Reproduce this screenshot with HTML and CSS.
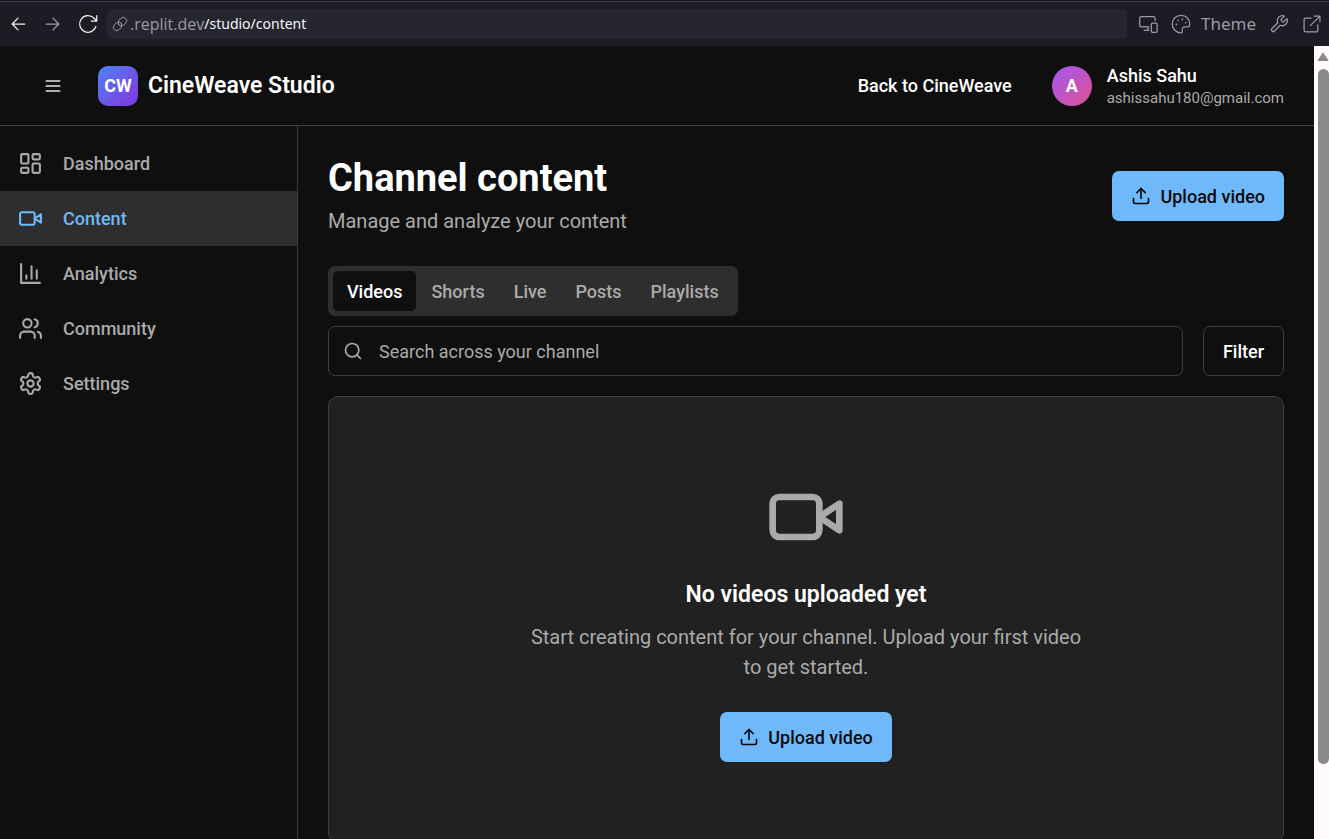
FILE: index.html
```html
<!DOCTYPE html>
<html lang="en">
<head>
<meta charset="utf-8">
<meta name="viewport" content="width=device-width, initial-scale=1">
<title>CineWeave Studio</title>
<link rel="stylesheet" href="styles.css">
</head>
<body>
<svg class="sprite" aria-hidden="true">
  <symbol id="video" viewBox="0 0 24 24"><path d="m22 8-6 4 6 4V8Z"/><rect x="2" y="6" width="14" height="12" rx="2"/></symbol>
  <symbol id="upload" viewBox="0 0 24 24"><path d="M21 15v4a2 2 0 0 1-2 2H5a2 2 0 0 1-2-2v-4"/><path d="m17 8-5-5-5 5"/><path d="M12 3v12"/></symbol>
</svg>

<div class="browser">
  <button class="tool bright" aria-label="Back"><svg class="icon i20" viewBox="0 0 24 24"><path d="M20 12H5M12 5l-7 7 7 7"/></svg></button>
  <button class="tool" aria-label="Forward"><svg class="icon i20" viewBox="0 0 24 24"><path d="M4 12h15M12 5l7 7-7 7"/></svg></button>
  <button class="tool bright" aria-label="Reload"><svg class="icon i20" viewBox="0 0 24 24"><path d="M21.500 15a10 10 0 1 1-2.500-10.200L22.500 8.500M22.500 2v6.500H16"/></svg></button>
  <div class="address">
    <svg class="icon i16" viewBox="0 0 24 24"><path d="M10 13a5 5 0 0 0 7.540.540l3-3a5 5 0 0 0-7.070-7.070l-3 3a5 5 0 0 0 0 7"/><path d="M14 11a5 5 0 0 0-7.540-.540l-3 3a5 5 0 0 0 7.070 7.070l3-3a5 5 0 0 0 0-7"/></svg>
    <label class="host" for="path">.replit.dev</label>
    <input class="path" id="path" type="text" value="/studio/content">
  </div>
  <div class="tools">
    <button class="tool" aria-label="Devices"><svg class="icon i20" viewBox="0 0 24 24"><path d="M20.500 8V5a2 2 0 0 0-2-2H4a2 2 0 0 0-2 2v8.500a2 2 0 0 0 2 2h9M12 15.500v4M7.500 19.500H13"/><rect x="16" y="11" width="7" height="11" rx="1.500"/></svg></button>
    <button class="tool theme"><svg class="icon i20" viewBox="0 0 24 24"><path d="M12 1.500a10.500 10.500 0 0 0 0 21c1.500 0 1.700-1 1.500-2.500-.500-3 .5-4.500 3.500-4.500h2.500c1.800 0 3-1.500 3-3.500C22.500 6 18 1.500 12 1.500Z"/><path d="M6.500 12.500h.1M8.500 7.500h.1M13.500 6.500h.1M17.500 10.500h.1" class="dots"/></svg>Theme</button>
    <button class="tool" aria-label="Tools"><svg class="icon i20" viewBox="0 0 24 24"><path d="M14.700 6.300a1 1 0 0 0 0 1.400l1.600 1.600a1 1 0 0 0 1.400 0l3.770-3.770a6 6 0 0 1-7.940 7.940l-6.910 6.910a2.120 2.120 0 0 1-3-3l6.910-6.910a6 6 0 0 1 7.940-7.940z"/></svg></button>
    <button class="tool" aria-label="Open in new tab"><svg class="icon i20" viewBox="0 0 24 24"><path d="M14.500 2.500h7v7M21.500 2.500 10 14M11 5H4.500a2 2 0 0 0-2 2v12.500a2 2 0 0 0 2 2H17a2 2 0 0 0 2-2V13"/></svg></button>
  </div>
</div>

<div class="viewport">
  <div class="app">
    <header class="header">
      <button class="menu" aria-label="Menu"><svg class="icon i20" viewBox="0 0 24 24"><path d="M4 6h16M4 12h16M4 18h16"/></svg></button>
      <a class="brand" href="#"><span class="logo">CW</span>CineWeave Studio</a>
      <a class="back" href="#">Back to CineWeave</a>
      <div class="user">
        <span class="avatar">A</span>
        <div>
          <div class="name">Ashis Sahu</div>
          <div class="email">ashissahu180@gmail.com</div>
        </div>
      </div>
    </header>

    <div class="body">
      <nav class="sidebar">
        <a class="item" href="#"><svg class="icon i25" viewBox="0 0 24 24"><rect x="3" y="3" width="7" height="9" rx="1"/><rect x="14" y="3" width="7" height="5" rx="1"/><rect x="14" y="12" width="7" height="9" rx="1"/><rect x="3" y="16" width="7" height="5" rx="1"/></svg>Dashboard</a>
        <a class="item active" href="#" aria-current="page"><svg class="icon i25"><use href="#video"/></svg>Content</a>
        <a class="item" href="#"><svg class="icon i25" viewBox="0 0 24 24"><path d="M3 3v18h18M18 17V9M13 17V5M8 17v-3"/></svg>Analytics</a>
        <a class="item" href="#"><svg class="icon i25" viewBox="0 0 24 24"><path d="M16 21v-2a4 4 0 0 0-4-4H6a4 4 0 0 0-4 4v2"/><circle cx="9" cy="7" r="4"/><path d="M22 21v-2a4 4 0 0 0-3-3.870M16 3.130a4 4 0 0 1 0 7.750"/></svg>Community</a>
        <a class="item" href="#"><svg class="icon i25" viewBox="0 0 24 24"><path d="M12.220 2h-.440a2 2 0 0 0-2 2v.180a2 2 0 0 1-1 1.730l-.430.250a2 2 0 0 1-2 0l-.150-.080a2 2 0 0 0-2.730.730l-.220.380a2 2 0 0 0 .730 2.730l.150.100a2 2 0 0 1 1 1.720v.510a2 2 0 0 1-1 1.740l-.150.090a2 2 0 0 0-.730 2.730l.220.380a2 2 0 0 0 2.730.730l.150-.080a2 2 0 0 1 2 0l.430.250a2 2 0 0 1 1 1.730V20a2 2 0 0 0 2 2h.440a2 2 0 0 0 2-2v-.180a2 2 0 0 1 1-1.730l.430-.250a2 2 0 0 1 2 0l.150.080a2 2 0 0 0 2.730-.730l.220-.390a2 2 0 0 0-.730-2.730l-.150-.080a2 2 0 0 1-1-1.740v-.500a2 2 0 0 1 1-1.740l.150-.090a2 2 0 0 0 .730-2.730l-.220-.380a2 2 0 0 0-2.730-.730l-.150.080a2 2 0 0 1-2 0l-.430-.250a2 2 0 0 1-1-1.730V4a2 2 0 0 0-2-2z"/><circle cx="12" cy="12" r="3"/></svg>Settings</a>
      </nav>

      <main class="main">
        <div class="heading">
          <div>
            <h1 class="title">Channel content</h1>
            <p class="subtitle">Manage and analyze your content</p>
          </div>
          <button class="primary"><svg class="icon i20"><use href="#upload"/></svg>Upload video</button>
        </div>

        <div class="tabs" role="tablist">
          <button class="tab selected" role="tab" aria-selected="true">Videos</button>
          <button class="tab" role="tab">Shorts</button>
          <button class="tab" role="tab">Live</button>
          <button class="tab" role="tab">Posts</button>
          <button class="tab" role="tab">Playlists</button>
        </div>

        <div class="filters">
          <label class="search">
            <svg class="icon i20" viewBox="0 0 24 24"><circle cx="11" cy="11" r="8"/><path d="m21 21-4.300-4.300"/></svg>
            <input class="query" type="text" placeholder="Search across your channel" aria-label="Search across your channel">
          </label>
          <button class="filter">Filter</button>
        </div>

        <section class="empty">
          <svg class="icon i80"><use href="#video"/></svg>
          <h2 class="empty-title">No videos uploaded yet</h2>
          <p class="empty-text">Start creating content for your channel. Upload your first video to get started.</p>
          <button class="primary"><svg class="icon i20"><use href="#upload"/></svg>Upload video</button>
        </section>
      </main>
    </div>
  </div>
  <div class="scrollbar" aria-hidden="true">
    <svg class="arrow" viewBox="0 0 12 10"><path d="M6 1 11 8.500H1Z"/></svg>
    <div class="thumb"></div>
    <div class="rest"></div>
  </div>
</div>
</body>
</html>
```

FILE: styles.css
```css
* {
  box-sizing: border-box;
}

body {
  margin: 0;
  height: 100vh;
  overflow: hidden;
  display: flex;
  flex-direction: column;
  background: #0f0f0f;
  color: #fff;
  font: 18px/25px Roboto, sans-serif;
}

button,
input {
  font: inherit;
  color: inherit;
  background: none;
  border: 0;
  padding: 0;
  margin: 0;
}

a {
  color: inherit;
  text-decoration: none;
}

h1,
h2,
p {
  margin: 0;
}

.sprite {
  display: none;
}

.icon {
  flex: none;
  display: block;
  fill: none;
  stroke: currentColor;
  stroke-width: 2;
  stroke-linecap: round;
  stroke-linejoin: round;
}

.i16 { width: 16px; height: 16px; }
.i20 { width: 20px; height: 20px; }
.i25 { width: 25px; height: 25px; }
.i80 { width: 80px; height: 80px; }

/* Browser bar */
.browser {
  flex: none;
  display: flex;
  align-items: center;
  gap: 15px;
  height: 46px;
  padding: 0 7px 0 8px;
  border-top: 1px solid #15151c;
  box-shadow: inset 0 1px #3c3c48;
  background: #1c1c25;
  color: #9a9aa3;
}

.browser .icon {
  stroke-width: 1.5;
}

.tool {
  display: flex;
  align-items: center;
  gap: 10px;
}

.bright {
  color: #f0f0f3;
}

.address {
  flex: 1;
  display: flex;
  align-items: center;
  height: 30px;
  margin-left: -6px;
  padding: 0 5px;
  border-radius: 6px;
  background: #262630;
  font: 14px/20px "Noto Sans", sans-serif;
}

.host {
  margin-left: 2px;
  font-size: 16px;
  font-family: "Open Sans", sans-serif;
}

.path {
  flex: 1;
  min-width: 0;
  color: #f5f5f7;
  outline: 0;
}

.tools {
  display: flex;
  gap: 13px;
  margin-left: -4px;
}

.theme {
  font: 17px/20px "Noto Sans", sans-serif;
}

.dots {
  stroke-width: 2;
}

/* Page and scrollbar */
.viewport {
  flex: 1;
  min-height: 0;
  display: flex;
}

.app {
  flex: 1;
  min-width: 0;
  display: flex;
  flex-direction: column;
}

.scrollbar {
  width: 15px;
  padding: 6px 0 0 3px;
  display: flex;
  flex-direction: column;
  background: #fffbfc;
}

.arrow {
  width: 12px;
  height: 10px;
  margin-bottom: 7px;
  fill: #8b8989;
  stroke: #8b8989;
  stroke-linejoin: round;
}

.thumb {
  flex: 695;
  margin-left: 1px;
  border-radius: 6px;
  background: #8b8989;
}

.rest {
  flex: 75;
}

/* Header */
.header {
  flex: none;
  display: flex;
  align-items: center;
  height: 80px;
  padding: 0 30px 0 43px;
  border-bottom: 1px solid #3f3f3f;
}

.menu {
  color: #e6e3e4;
}

.brand {
  display: flex;
  align-items: center;
  gap: 10px;
  margin-left: 35px;
  font-size: 23px;
  font-weight: 600;
}

.logo,
.avatar {
  display: flex;
  align-items: center;
  justify-content: center;
  width: 40px;
  height: 40px;
  font-size: 18px;
  font-weight: 700;
}

.logo {
  border-radius: 10px;
  background: linear-gradient(135deg, #4f83f1, #8335df);
}

.back {
  margin-left: auto;
  font-weight: 500;
}

.user {
  display: flex;
  align-items: center;
  gap: 15px;
  margin-left: 40px;
}

.avatar {
  border-radius: 50%;
  background: linear-gradient(135deg, #a259f0, #de5094);
}

.name {
  font-weight: 500;
}

.email {
  font-size: 15px;
  line-height: 20px;
  color: #aaa;
}

/* Sidebar */
.body {
  flex: 1;
  min-height: 0;
  display: flex;
}

.sidebar {
  flex: none;
  width: 298px;
  padding-top: 10px;
  border-right: 1px solid #3f3f3f;
}

.item {
  display: flex;
  align-items: center;
  gap: 20px;
  height: 55px;
  padding: 0 18px;
  color: #aaa;
  font-weight: 500;
}

.active {
  background: #2e2e2e;
  color: #6fb9fa;
}

/* Content */
.main {
  flex: 1;
  min-width: 0;
  padding: 30px;
  overflow: hidden;
}

.heading {
  display: flex;
  align-items: center;
  justify-content: space-between;
  margin-bottom: 30px;
}

.title {
  margin-bottom: 5px;
  font-size: 38px;
  line-height: 45px;
  font-weight: 700;
}

.subtitle {
  font-size: 20px;
  line-height: 30px;
  color: #aaa;
}

.primary {
  display: flex;
  align-items: center;
  gap: 9px;
  height: 50px;
  padding: 0 19px;
  border-radius: 7px;
  background: #6fb9fa;
  color: #0a0a0a;
  font-weight: 500;
}

.tabs {
  display: flex;
  gap: 1px;
  width: fit-content;
  height: 50px;
  padding: 5px;
  border-radius: 7px;
  background: #2e2e2e;
  color: #aaa;
}

.tab {
  padding: 0 14px;
  border-radius: 5px;
  font-weight: 500;
}

.selected {
  background: #0f0f0f;
  color: #fff;
}

.filters {
  display: flex;
  gap: 20px;
  height: 50px;
  margin: 10px 0 20px;
}

.search {
  flex: 1;
  display: flex;
  align-items: center;
  gap: 16px;
  padding: 0 14px;
  border: 1px solid #3f3f3f;
  border-radius: 7px;
  color: #aaa;
}

.query {
  flex: 1;
  min-width: 0;
  outline: 0;
}

.query::placeholder {
  color: #aaa;
  opacity: 1;
}

.filter {
  padding: 0 19px;
  border: 1px solid #3f3f3f;
  border-radius: 7px;
  font-weight: 500;
}

.empty {
  display: flex;
  flex-direction: column;
  align-items: center;
  padding: 80px 30px;
  border: 1px solid #3f3f3f;
  border-radius: 10px;
  background: #212121;
  color: #aaa;
  text-align: center;
}

.empty-title {
  margin: 20px 0 10px;
  color: #fff;
  font-size: 23px;
  line-height: 35px;
  font-weight: 600;
}

.empty-text {
  max-width: 560px;
  margin-bottom: 30px;
  font-size: 20px;
  line-height: 30px;
}
```
